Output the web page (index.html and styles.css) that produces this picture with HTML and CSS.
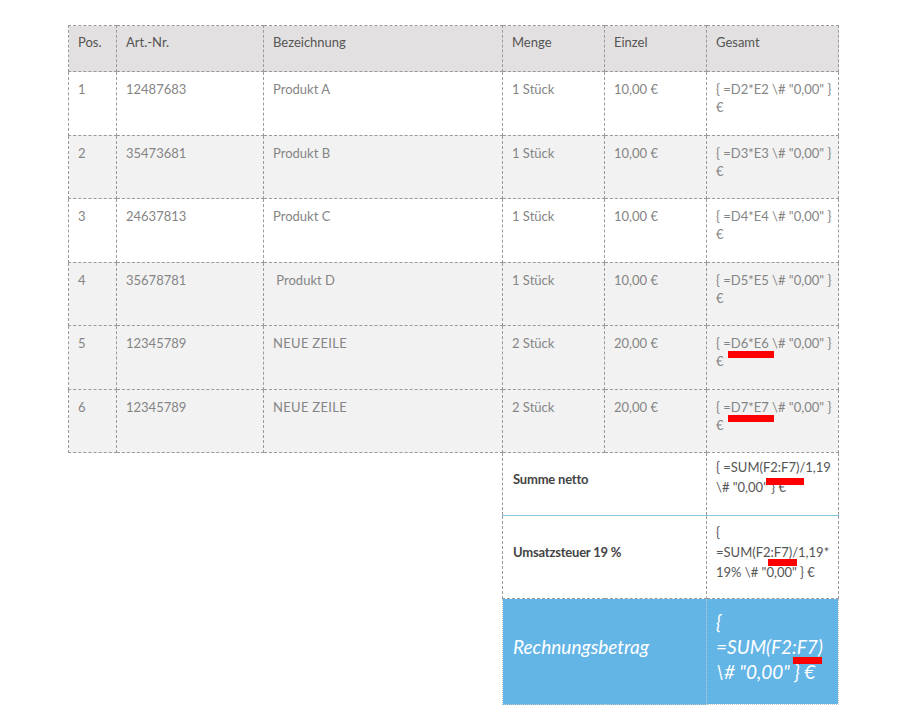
FILE: index.html
```html
<!DOCTYPE html>
<html lang="de">
<head>
<meta charset="utf-8">
<title>Rechnung</title>
<link rel="stylesheet" href="styles.css">
</head>
<body>
<div class="page">
<table class="inv">
  <colgroup>
    <col class="c1"><col class="c2"><col class="c3"><col class="c4"><col class="c5"><col class="c6">
  </colgroup>
  <thead>
    <tr class="head">
      <th>Pos.</th><th>Art.-Nr.</th><th>Bezeichnung</th><th>Menge</th><th>Einzel</th><th>Gesamt</th>
    </tr>
  </thead>
  <tbody>
    <tr class="row odd"><td>1</td><td>12487683</td><td>Produkt A</td><td>1 Stück</td><td>10,00 €</td><td class="f">{ =D2*E2 \# "0,00" } €</td></tr>
    <tr class="row even"><td>2</td><td>35473681</td><td>Produkt B</td><td>1 Stück</td><td>10,00 €</td><td class="f">{ =D3*E3 \# "0,00" } €</td></tr>
    <tr class="row odd"><td>3</td><td>24637813</td><td>Produkt C</td><td>1 Stück</td><td>10,00 €</td><td class="f">{ =D4*E4 \# "0,00" } €</td></tr>
    <tr class="row even"><td>4</td><td>35678781</td><td>&nbsp;Produkt D</td><td>1 Stück</td><td>10,00 €</td><td class="f">{ =D5*E5 \# "0,00" } €</td></tr>
    <tr class="row even"><td>5</td><td>12345789</td><td class="caps">NEUE ZEILE</td><td>2 Stück</td><td>20,00 €</td><td class="f mark">{ =D6*E6 \# "0,00" } €<span class="redbar rb-row"></span></td></tr>
    <tr class="row even"><td>6</td><td>12345789</td><td class="caps">NEUE ZEILE</td><td>2 Stück</td><td>20,00 €</td><td class="f mark">{ =D7*E7 \# "0,00" } €<span class="redbar rb-row"></span></td></tr>
    <tr class="sum s1">
      <td class="blank" colspan="3"></td>
      <td class="lbl" colspan="2">Summe netto</td>
      <td class="val mark">{ =SUM(F2:F7)/1,19 \# "0,00" } €<span class="redbar rb-s1"></span></td>
    </tr>
    <tr class="sum s2">
      <td class="blank" colspan="3"></td>
      <td class="lbl" colspan="2">Umsatzsteuer 19 %</td>
      <td class="val mark">{ =SUM(F2:F7)/1,19* 19% \# "0,00" } €<span class="redbar rb-s2"></span></td>
    </tr>
    <tr class="sum total">
      <td class="blank" colspan="3"></td>
      <td class="lbl" colspan="2">Rechnungsbetrag</td>
      <td class="val mark">{ =SUM(F2:F7) \# "0,00" } €<span class="redbar rb-t"></span></td>
    </tr>
  </tbody>
</table>
</div>
</body>
</html>
```
FILE: styles.css
```css
html, body {
  margin: 0;
  padding: 0;
  background: #ffffff;
}
body {
  font-family: Lato, "Open Sans", sans-serif;
}
.page {
  padding: 25px 0 0 68px;
}
.inv {
  border-collapse: collapse;
  table-layout: fixed;
  width: 770px;
}
.c1 { width: 48px; }
.c2 { width: 147px; }
.c3 { width: 239px; }
.c4 { width: 102px; }
.c5 { width: 102px; }
.c6 { width: 132px; }

.inv th, .inv td {
  border: 1px dashed #9a9a9a;
  text-align: left;
  vertical-align: top;
  padding: 8px 9px 0 9px;
  font-size: 13px;
  line-height: 18px;
  box-sizing: border-box;
}
.head th {
  background: #e2e0e0;
  color: #555555;
  font-weight: 400;
  height: 46px;
  padding-top: 7px;
}
.row td {
  color: #858585;
  font-weight: 400;
  height: 63.5px;
}
.row td.f { padding-right: 2px; }
.row.odd td { background: #ffffff; }
.row.even td { background: #f2f2f2; }
.caps { letter-spacing: 0.3px; }

.mark { position: relative; }
.redbar {
  position: absolute;
  background: #ff0000;
  height: 7px;
}
.rb-row { left: 21px; top: 25px; width: 46px; }
.rb-s1 { left: 59px; top: 25px; width: 38px; }
.rb-s2 { left: 61px; top: 43px; width: 29px; }
.rb-t { left: 86px; top: 58px; width: 29px; }

.inv td.blank {
  border: none;
  background: transparent;
  padding: 0;
}
.sum td.lbl, .sum td.val {
  vertical-align: middle;
  padding: 0 9px 10px 9px;
}
.sum td.lbl {
  font-weight: 700;
  color: #444444;
  padding-left: 10px;
  letter-spacing: -0.2px;
}
.sum td.val {
  font-weight: 400;
  color: #555555;
  line-height: 20px;
  font-size: 13px;
  padding-right: 2px;
}
.s1 td { height: 63px; }
.s1 td.val { padding-bottom: 14px; }
.s2 td { height: 83px; }
.s1 td.lbl, .s1 td.val { border-bottom: 1px solid #86c5dc; }
.total td { height: 106px; }
.total td.lbl, .total td.val {
  background: #63b5e6;
  color: #ffffff;
  font-style: italic;
  font-weight: 400;
  font-size: 19px;
  line-height: 25px;
  border-color: #c9c9c9;
  border-style: dotted;
}
.total td.lbl { letter-spacing: 0; }
.total td.val { padding-right: 6px; }
```
